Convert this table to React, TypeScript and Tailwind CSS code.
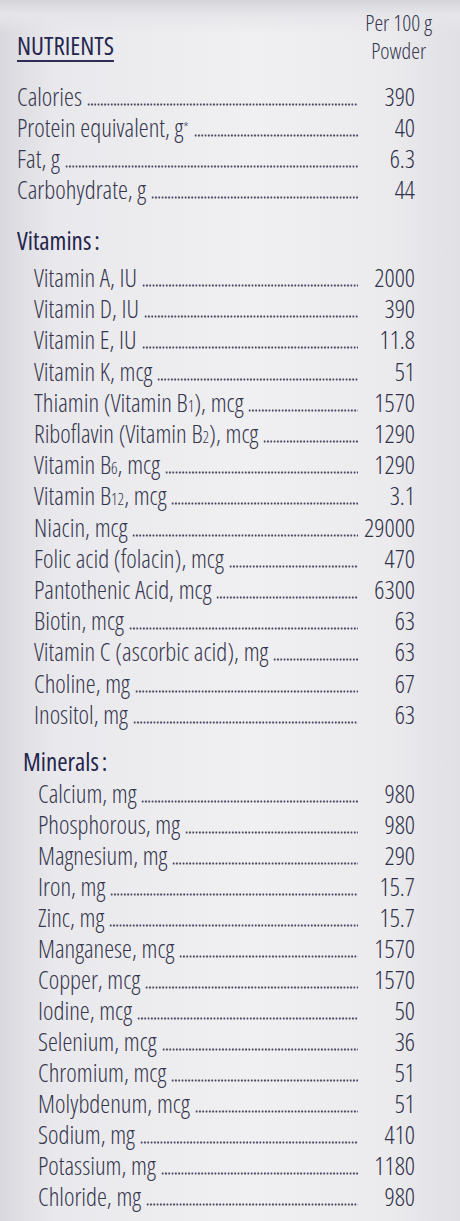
import type { ReactNode } from "react";

type Item = { label: ReactNode; value: string };

const basics: Item[] = [
  { label: "Calories", value: "390" },
  {
    label: (
      <>
        Protein equivalent, g<sup className="top-[-0.3em] text-[15px] leading-none">*</sup>
      </>
    ),
    value: "40",
  },
  { label: "Fat, g", value: "6.3" },
  { label: "Carbohydrate, g", value: "44" },
];

const B = ({ n }: { n: string }) => (
  <>
    B<sub className="bottom-0 text-[16px] leading-none">{n}</sub>
  </>
);

const vitamins: Item[] = [
  { label: "Vitamin A, IU", value: "2000" },
  { label: "Vitamin D, IU", value: "390" },
  { label: "Vitamin E, IU", value: "11.8" },
  { label: "Vitamin K, mcg", value: "51" },
  {
    label: (
      <>
        Thiamin (Vitamin <B n="1" />), mcg
      </>
    ),
    value: "1570",
  },
  {
    label: (
      <>
        Riboflavin (Vitamin <B n="2" />), mcg
      </>
    ),
    value: "1290",
  },
  {
    label: (
      <>
        Vitamin <B n="6" />, mcg
      </>
    ),
    value: "1290",
  },
  {
    label: (
      <>
        Vitamin <B n="12" />, mcg
      </>
    ),
    value: "3.1",
  },
  { label: "Niacin, mcg", value: "29000" },
  { label: "Folic acid (folacin), mcg", value: "470" },
  { label: "Pantothenic Acid, mcg", value: "6300" },
  { label: "Biotin, mcg", value: "63" },
  { label: "Vitamin C (ascorbic acid), mg", value: "63" },
  { label: "Choline, mg", value: "67" },
  { label: "Inositol, mg", value: "63" },
];

const minerals: Item[] = [
  { label: "Calcium, mg", value: "980" },
  { label: "Phosphorous, mg", value: "980" },
  { label: "Magnesium, mg", value: "290" },
  { label: "Iron, mg", value: "15.7" },
  { label: "Zinc, mg", value: "15.7" },
  { label: "Manganese, mcg", value: "1570" },
  { label: "Copper, mcg", value: "1570" },
  { label: "Iodine, mcg", value: "50" },
  { label: "Selenium, mcg", value: "36" },
  { label: "Chromium, mcg", value: "51" },
  { label: "Molybdenum, mcg", value: "51" },
  { label: "Sodium, mg", value: "410" },
  { label: "Potassium, mg", value: "1180" },
  { label: "Chloride, mg", value: "980" },
];

function Row({ item, h }: { item: Item; h: string }) {
  return (
    <div className={`flex items-baseline ${h}`}>
      <span className="whitespace-nowrap">{item.label}</span>
      <span className="ml-[5px] h-[3px] flex-1 bg-[radial-gradient(circle,#45455e_0.85px,transparent_1.3px)] bg-[length:3.3px_3px] bg-repeat-x" />
      <span className="w-[57px] text-right text-[#303049]">{item.value}</span>
    </div>
  );
}

export default function App() {
  return (
    <div className="min-h-[1221px] w-[460px] overflow-hidden bg-[linear-gradient(180deg,#d4d4d9_0px,#e6e6ea_14px,transparent_34px),linear-gradient(90deg,#d8d8de_0%,#e9e9ed_12%,#f0f0f2_55%,#ebebee_85%,#e0e0e5_100%)] font-['Open_Sans',sans-serif] text-[25px] font-[350] [font-stretch:75%] text-[#36364d]">
      {/* header */}
      <div className="flex items-start justify-between pl-[17px] pr-[28px] pt-[8px]">
        <div className="mt-[22px] border-b-2 border-[#2c2c55] font-[450] leading-[30px] text-[#26264e]">
          NUTRIENTS
        </div>
        <div className="text-center text-[22px] leading-[28px]">
          <div>Per 100 g</div>
          <div>Powder</div>
        </div>
      </div>

      <div className="pl-[17px] pr-[45px]">
        <div className="mt-[17px]">
          {basics.map((it, i) => (
            <Row key={i} item={it} h="leading-[31px]" />
          ))}
        </div>

        <div className="mt-[20px] font-[450] leading-[30px] text-[#25254c]">
          Vitamins<span className="ml-[3px]">:</span>
        </div>
        <div className="mt-[7px] pl-[17px]">
          {vitamins.map((it, i) => (
            <Row key={i} item={it} h="leading-[31.2px]" />
          ))}
        </div>

        <div className="mt-[16px] pl-[6px] font-[450] leading-[30px] text-[#25254c]">
          Minerals<span className="ml-[3px]">:</span>
        </div>
        <div className="mt-[2px] pl-[21px]">
          {minerals.map((it, i) => (
            <Row key={i} item={it} h="leading-[31px]" />
          ))}
        </div>
      </div>
    </div>
  );
}
